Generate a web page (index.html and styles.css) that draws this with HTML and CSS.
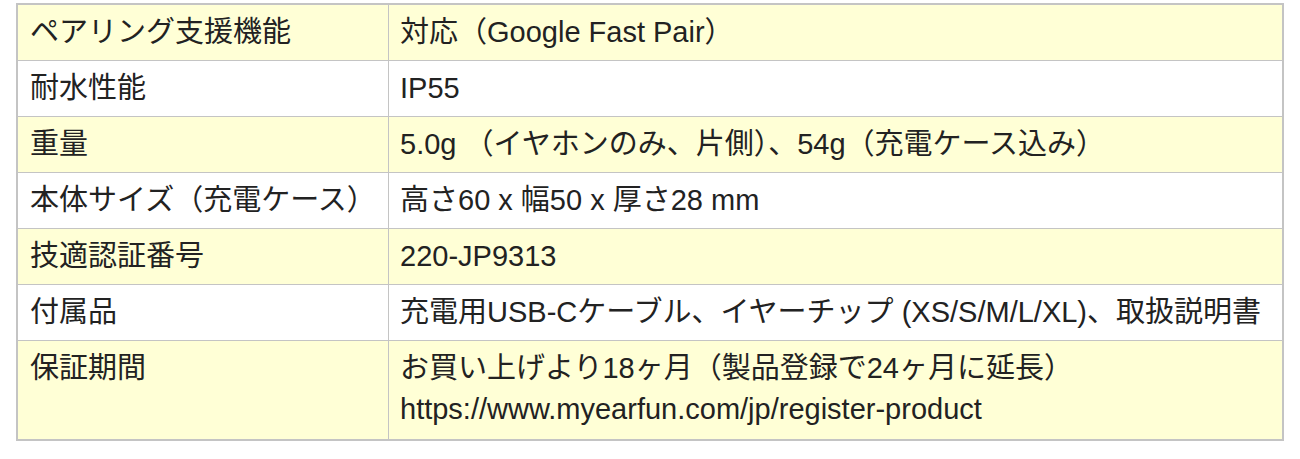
FILE: index.html
```html
<!DOCTYPE html>
<html lang="ja">
<head>
<meta charset="utf-8">
<link rel="stylesheet" href="styles.css">
</head>
<body>
<table class="spec">
  <tr class="odd"><td class="k">ペアリング支援機能</td><td class="v">対応（Google Fast Pair）</td></tr>
  <tr><td class="k">耐水性能</td><td class="v">IP55</td></tr>
  <tr class="odd"><td class="k">重量</td><td class="v">5.0g （イヤホンのみ、片側）、54g（充電ケース込み）</td></tr>
  <tr><td class="k">本体サイズ（充電ケース）</td><td class="v">高さ60 x 幅50 x 厚さ28 mm</td></tr>
  <tr class="odd"><td class="k">技適認証番号</td><td class="v">220-JP9313</td></tr>
  <tr><td class="k">付属品</td><td class="v">充電用USB-Cケーブル、イヤーチップ (XS/S/M/L/XL)、取扱説明書</td></tr>
  <tr class="odd last"><td class="k">保証期間</td><td class="v">お買い上げより18ヶ月（製品登録で24ヶ月に延長）<br>https://www.myearfun.com/jp/register-product</td></tr>
</table>
</body>
</html>
```
FILE: styles.css
```css
html, body {
  margin: 0;
  padding: 0;
  background: #ffffff;
}
body {
  padding: 3px 0 0 16px;
  font-family: "Liberation Sans", "Noto Sans CJK JP", sans-serif;
  font-size: 29px;
  color: #222222;
}
.spec {
  border-collapse: collapse;
  width: 1268px;
  border: 2px solid #c4c4c4;
}
.spec td {
  border: 1px solid #c4c4c4;
  padding: 7px 11px;
  line-height: 41px;
  vertical-align: top;
  white-space: nowrap;
}
.spec .k {
  width: 346px;
  padding-left: 12px;
  padding-right: 12px;
}
.spec .odd td {
  background: #ffffd6;
}
.spec .last td {
  padding-bottom: 9px;
}
```
